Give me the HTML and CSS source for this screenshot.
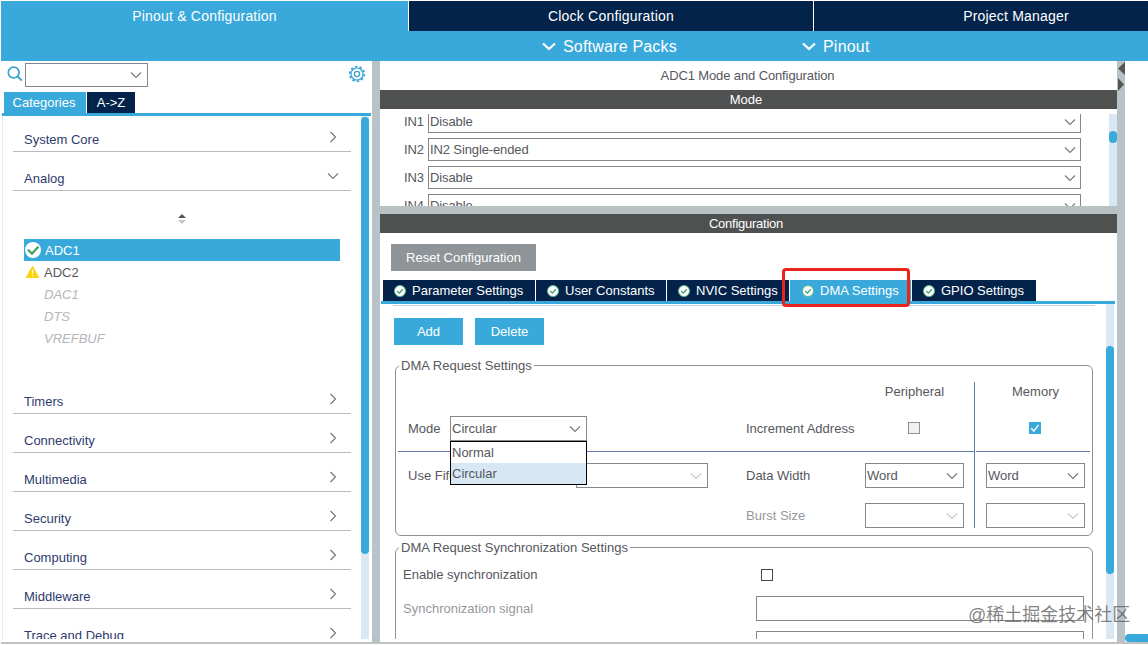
FILE: index.html
```
<!DOCTYPE html>
<html lang="en">
<head>
  <meta charset="UTF-8">
  <title>Pinout &amp; Configuration</title>
  <link rel="stylesheet" href="styles.css">
</head>
<body>

  <!-- shared icons -->
  <svg class="defs" width="0" height="0">
    <symbol id="down" viewBox="0 0 12 8"><path d="M1 1.5l5 5 5-5" fill="none" stroke="currentColor" stroke-width="1.1"/></symbol>
    <symbol id="right" viewBox="0 0 8 12"><path d="M1.5 1l5 5-5 5" fill="none" stroke="currentColor" stroke-width="1.2"/></symbol>
    <symbol id="ok" viewBox="0 0 14 14">
      <circle cx="7" cy="7" r="5.5" fill="#fff" stroke="#5fb98c" stroke-width="1"/>
      <path d="M4.2 7l2.2 2.1 3.4-3.8" fill="none" stroke="#3d9f6c" stroke-width="1.3"/>
    </symbol>
  </svg>

  <div class="app">
    <nav class="main-tabs">
      <div class="main-tab active">Pinout &amp; Configuration</div>
      <div class="main-tab">Clock Configuration</div>
      <div class="main-tab">Project Manager</div>
    </nav>
    <div class="toolbar">
      <div class="tool packs"><svg width="14" height="9" viewBox="0 0 14 9"><path d="M1 1.5l6 5.5 6-5.5" fill="none" stroke="#fff" stroke-width="2.2"/></svg>Software Packs</div>
      <div class="tool"><svg width="14" height="9" viewBox="0 0 14 9"><path d="M1 1.5l6 5.5 6-5.5" fill="none" stroke="#fff" stroke-width="2.2"/></svg>Pinout</div>
    </div>

    <div class="workspace">
      <aside class="sidebar">
        <div class="search">
          <svg class="lens" width="16" height="16" viewBox="0 0 16 16"><circle cx="6.7" cy="6.5" r="5.4" fill="none" stroke="#3aa3d4" stroke-width="1.7"/><path d="M10.6 10.4l4.2 4.3" stroke="#3aa3d4" stroke-width="1.9"/></svg>
          <div class="select search-box"><svg><use href="#down"/></svg></div>
          <svg class="gear" width="18" height="18" viewBox="0 0 18 18">
            <circle cx="9" cy="9" r="7.3" fill="none" stroke="#3aa3d4" stroke-width="1.7" stroke-dasharray="2.5 2.087"/>
            <circle cx="9" cy="9" r="6" fill="none" stroke="#3aa3d4" stroke-width="1.2"/>
            <circle cx="9" cy="9" r="2.6" fill="none" stroke="#3aa3d4" stroke-width="1.3"/>
          </svg>
        </div>
        <div class="side-tabs">
          <div class="side-tab active">Categories</div>
          <div class="side-tab">A-&gt;Z</div>
        </div>
        <div class="side-body">
          <div class="categories">
            <div class="category first">System Core<svg width="8" height="12"><use href="#right"/></svg></div>
            <div class="category open">Analog<svg width="12" height="8"><use href="#down"/></svg></div>
            <div class="peripherals">
              <svg class="sort" width="10" height="10" viewBox="0 0 10 10"><path d="M1 4l4-4 4 4z" fill="#555"/><path d="M1 6h8l-4 4z" fill="#c4c4c4"/></svg>
              <div class="peripheral selected">
                <svg width="18" height="18" viewBox="0 0 18 18"><circle cx="9" cy="9" r="8" fill="#fff"/><path d="M4 8.7l4 4 6.3-7" fill="none" stroke="#3f9e60" stroke-width="2.3"/></svg>ADC1
              </div>
              <div class="peripheral warn">
                <svg width="18" height="18" viewBox="0 0 18 18"><path d="M8.5 3.4l6.2 11H2.3z" fill="#fdd20a" stroke="#fdd20a" stroke-width="1" stroke-linejoin="round"/><path d="M8.5 6.5v4.3M8.5 12v1.5" stroke="#fff" stroke-width="1.2"/></svg>ADC2
              </div>
              <div class="peripheral off">DAC1</div>
              <div class="peripheral off">DTS</div>
              <div class="peripheral off">VREFBUF</div>
            </div>
            <div class="category">Timers<svg width="8" height="12"><use href="#right"/></svg></div>
            <div class="category">Connectivity<svg width="8" height="12"><use href="#right"/></svg></div>
            <div class="category">Multimedia<svg width="8" height="12"><use href="#right"/></svg></div>
            <div class="category">Security<svg width="8" height="12"><use href="#right"/></svg></div>
            <div class="category">Computing<svg width="8" height="12"><use href="#right"/></svg></div>
            <div class="category">Middleware<svg width="8" height="12"><use href="#right"/></svg></div>
            <div class="category">Trace and Debug<svg width="8" height="12"><use href="#right"/></svg></div>
          </div>
          <div class="scrollbar side-scroll"><div class="thumb"></div></div>
        </div>
      </aside>

      <div class="splitter"></div>

      <main class="content">
        <div class="title">ADC1 Mode and Configuration</div>
        <div class="bar">Mode</div>
        <section class="mode">
          <div class="inputs">
            <div class="input-row"><label>IN1</label><div class="select">Disable<svg><use href="#down"/></svg></div></div>
            <div class="input-row"><label>IN2</label><div class="select">IN2 Single-ended<svg><use href="#down"/></svg></div></div>
            <div class="input-row"><label>IN3</label><div class="select">Disable<svg><use href="#down"/></svg></div></div>
            <div class="input-row"><label>IN4</label><div class="select">Disable<svg><use href="#down"/></svg></div></div>
          </div>
          <div class="scrollbar mode-scroll"><div class="thumb"></div></div>
        </section>
        <div class="h-splitter"></div>
        <div class="bar config-bar">Configuration</div>

        <section class="config">
          <button class="reset">Reset Configuration</button>
          <div class="tabs">
            <div class="tab t-param"><svg><use href="#ok"/></svg>Parameter Settings</div>
            <div class="tab t-user"><svg><use href="#ok"/></svg>User Constants</div>
            <div class="tab t-nvic"><svg><use href="#ok"/></svg>NVIC Settings</div>
            <div class="tab t-dma active"><svg><use href="#ok"/></svg>DMA Settings<div class="highlight"></div></div>
            <div class="tab t-gpio"><svg><use href="#ok"/></svg>GPIO Settings</div>
          </div>
          <div class="config-body">
            <div class="dma">
              <div class="buttons">
                <button>Add</button>
                <button>Delete</button>
              </div>

              <fieldset class="request">
                <legend>DMA Request Settings</legend>
                <div class="request-main">
                  <div class="row head"><span class="peripheral-head">Peripheral</span></div>
                  <div class="row">
                    <label class="mode-label">Mode</label>
                    <div class="select mode-select">Circular<svg><use href="#down"/></svg>
                      <div class="menu">
                        <div class="option">Normal</div>
                        <div class="option current">Circular</div>
                      </div>
                    </div>
                    <label class="field-label">Increment Address</label>
                    <div class="check-cell"><span class="check disabled"></span></div>
                  </div>
                  <div class="rule"></div>
                  <div class="row">
                    <label class="fifo-label">Use Fifo</label>
                    <div class="select fifo-select disabled"><svg><use href="#down"/></svg></div>
                    <label class="field-label">Data Width</label>
                    <div class="select width-select">Word<svg><use href="#down"/></svg></div>
                  </div>
                  <div class="row last">
                    <label class="field-label dim">Burst Size</label>
                    <div class="select width-select disabled"><svg><use href="#down"/></svg></div>
                  </div>
                </div>
                <div class="request-memory">
                  <div class="row head"><span class="memory-head">Memory</span></div>
                  <div class="row">
                    <div class="check-cell"><span class="check on"><svg width="12" height="12" viewBox="0 0 12 12"><path d="M2.3 6.3l2.5 2.9 4.7-6.4" fill="none" stroke="#fff" stroke-width="1.4"/></svg></span></div>
                  </div>
                  <div class="rule"></div>
                  <div class="row"><div class="select width-select">Word<svg><use href="#down"/></svg></div></div>
                  <div class="row last"><div class="select width-select disabled"><svg><use href="#down"/></svg></div></div>
                </div>
              </fieldset>

              <fieldset class="sync">
                <legend>DMA Request Synchronization Settings</legend>
                <div class="sync-row"><label>Enable synchronization</label><span class="check"></span></div>
                <div class="sync-row dim"><label>Synchronization signal</label><div class="field"></div></div>
                <div class="sync-row dim"><label>Signal polarity</label><div class="field"></div></div>
              </fieldset>
            </div>
            <div class="scrollbar config-scroll"><div class="thumb"></div></div>
          </div>
        </section>
      </main>

      <div class="splitter right-splitter">
        <svg width="8" height="32" viewBox="0 0 8 32"><path d="M8 1v13L1 7.5zM1 17v13l6-6.5z" fill="#555"/></svg>
      </div>
      <div class="pinout-view"><div class="pinout-scroll"></div></div>
    </div>
    <div class="watermark">@稀土掘金技术社区</div>
  </div>

</body>
</html>
```
FILE: styles.css
```
* { box-sizing: border-box; }
body {
  margin: 0;
  background: #fff;
  font-family: "Liberation Sans", Arial, sans-serif;
  font-size: 13px;
  line-height: 16px;
  color: #56575c;
}
.defs { position: absolute; }
.app {
  position: relative;
  width: 1148px;
  height: 645px;
  padding: 1px 0 0 1px;
  overflow: hidden;
  display: flex;
  flex-direction: column;
}
button {
  font: inherit;
  color: #fff;
  background: #39a9dc;
  border: none;
  padding: 0;
}
fieldset { margin: 0; padding: 0; min-width: 0; }
.dim { color: #96989c; }

/* header */
.main-tabs {
  display: flex;
  gap: 1px;
  height: 30px;
  flex: none;
}
.main-tab {
  flex: none;
  width: 404px;
  background: #03234b;
  color: #fff;
  font-size: 14px;
  letter-spacing: 0.2px;
  line-height: 30px;
  text-align: center;
}
.main-tab.active { width: 407px; background: #39a9dc; }
.toolbar {
  display: flex;
  flex: none;
  height: 30px;
  padding-left: 541px;
  background: #39a9dc;
  color: #fff;
  font-size: 16px;
  letter-spacing: 0.2px;
}
.tool { display: flex; align-items: center; gap: 7px; padding-top: 1px; }
.packs { width: 260px; }

.workspace {
  display: flex;
  flex: none;
  height: 583px;
  border-bottom: 2px solid #c0c1c3;
}
.splitter { width: 8px; flex: none; background: #b7c3c8; }
.scrollbar { width: 8px; flex: none; background: #d9e8f3; }
.thumb { background: #39a9dc; border-radius: 4px; }

.select {
  position: relative;
  display: flex;
  align-items: center;
  justify-content: space-between;
  border: 1px solid #85878b;
  background: #fff;
  padding: 0 4px 0 1px;
  height: 25px;
}
.select svg { width: 12px; height: 8px; margin-left: auto; color: #76787b; }
.select.disabled svg { color: #c5c7c9; }

/* sidebar */
.sidebar {
  width: 371px;
  flex: none;
  display: flex;
  flex-direction: column;
  padding-right: 1px;
}
.search {
  display: flex;
  height: 31px;
  padding: 2px 5px 0 6px;
}
.lens { margin: 3px 2px 0 0; }
.search-box { width: 123px; height: 24px; padding-right: 5px; }
.gear { margin: 2px 0 0 auto; }
.side-tabs {
  display: flex;
  gap: 1px;
  padding-left: 2px;
  margin-left: 1px;
  border-bottom: 3px solid #39a9dc;
}
.side-tab {
  height: 21px;
  width: 48px;
  line-height: 21px;
  text-align: center;
  color: #fff;
  background: #03234b;
}
.side-tab.active { width: 82px; padding-right: 2px; background: #39a9dc; }
.side-body {
  display: flex;
  flex: 1;
  min-height: 0;
  margin: 0 1px 3px 1px;
  border-left: 1px solid #e6e9ef;
}
.categories {
  width: 358px;
  padding: 0 10px;
  overflow: hidden;
}
.category {
  display: flex;
  justify-content: space-between;
  height: 39px;
  padding: 19px 14px 0 11px;
  border-bottom: 1px solid #b9bbbd;
  color: #2e3b6e;
}
.category svg { color: #76797c; margin-top: -1px; }
.category.first { height: 36px; padding-top: 16px; }
.category.open { padding-right: 12px; }
.category.open svg { margin-top: 1px; }
.peripherals { height: 184px; padding: 23px 11px 0; }
.sort { display: block; margin: 0 auto 15px; }
.peripheral {
  display: flex;
  align-items: center;
  height: 22px;
  padding-top: 1px;
  gap: 3px;
}
.peripheral svg { margin-top: -1px; }
.peripheral.selected { color: #fff; background: #39a9dc; }
.peripheral.warn { gap: 2px; }
.peripheral.off { padding-left: 20px; font-style: italic; color: #b4b6b9; }
.side-scroll .thumb { height: 437px; margin-top: 1px; }

/* center panel */
.content {
  width: 737px;
  flex: none;
  display: flex;
  flex-direction: column;
}
.title {
  height: 29px;
  line-height: 29px;
  text-align: center;
  padding-right: 2px;
  letter-spacing: -0.12px;
}
.bar {
  height: 19px;
  line-height: 19px;
  text-align: center;
  padding-right: 5px;
  color: #fff;
  background: #4f5150;
}
.config-bar { letter-spacing: -0.25px; }
.mode {
  display: flex;
  justify-content: space-between;
  height: 92px;
  margin-top: 5px;
  overflow: hidden;
}
.inputs {
  display: flex;
  flex-direction: column;
  gap: 5px;
  width: 701px;
  margin-top: -4px;
  letter-spacing: -0.12px;
}
.input-row { display: flex; align-items: center; padding-left: 24px; }
.input-row label { width: 24px; }
.input-row .select { width: 653px; height: 23px; }
.mode-scroll .thumb { height: 12px; margin-top: 17px; }
.h-splitter { height: 8px; flex: none; background: #b9c1c4; }

.config {
  flex: 1;
  min-height: 0;
  display: flex;
  flex-direction: column;
  padding-top: 11px;
}
.reset {
  width: 145px;
  height: 27px;
  flex: none;
  margin-left: 11px;
  background: #8f9498;
}
.tabs {
  display: flex;
  gap: 1px;
  margin: 9px 2px 0 1px;
  padding-left: 2px;
  border-bottom: 3px solid #39a9dc;
}
.tab {
  position: relative;
  display: flex;
  align-items: center;
  height: 21px;
  padding-left: 10px;
  gap: 5px;
  color: #fff;
  background: #03234b;
  white-space: nowrap;
}
.tab svg { width: 14px; height: 14px; flex: none; }
.tab.active { background: #39a9dc; }
.t-param { width: 152px; }
.t-user { width: 130px; }
.t-nvic { width: 122px; }
.t-dma { width: 121px; padding-left: 11px; }
.t-gpio { width: 124px; }
/* red frame drawn over the DMA tab */
.highlight {
  position: absolute;
  left: -8px;
  top: -12px;
  width: 128px;
  height: 39px;
  border: 3px solid #e8241c;
  border-radius: 4px;
}
.config-body {
  display: flex;
  flex: 1;
  min-height: 0;
  margin-bottom: 3px;
  overflow: hidden;
}
.dma { width: 726px; padding: 1px 13px 0 15px; }
.config-scroll .thumb { height: 228px; margin-top: 42px; }
.buttons {
  display: flex;
  gap: 12px;
  margin: 0 -2px 0 -2px;
  padding: 12px 0 0 1px;
  border-top: 1px solid #c3d2e3;
}
.buttons button { width: 69px; height: 27px; }

.request, .sync {
  width: 698px;
  border: 1px solid #8d9095;
  border-radius: 6px;
}
legend {
  height: 17px;
  line-height: 17px;
  margin-left: 1px;
  padding: 0 2px;
}
.request {
  height: 179px;
  margin-top: 12px;
  padding: 8px 2px 0;
  display: flex;
}
.request-main { width: 576px; }
.request-memory {
  flex: 1;
  height: 146px;
  border-left: 1px solid #5d7ea8;
}
.row { display: flex; align-items: center; height: 25px; }
.row.head { height: 20px; margin-bottom: 14px; }
.row.last { margin-top: 15px; }
.rule { height: 1px; margin: 10px 0 11px; background: #5d7ea8; }
.peripheral-head { width: 99px; margin-left: 467px; text-align: center; }
.mode-label { width: 42px; margin-left: 10px; }
.mode-select { width: 137px; margin-right: 159px; padding-right: 5px; }
.fifo-label { width: 168px; margin-left: 10px; }
.fifo-select { width: 132px; margin-right: 38px; padding-right: 5px; }
.field-label { width: 119px; }
.row.last .field-label { margin-left: 348px; }
.width-select { width: 99px; padding-right: 5px; }
.check-cell { width: 98px; height: 14px; display: flex; justify-content: center; }
.request-memory .row { padding-left: 11px; }
.request-memory .rule { margin-left: 1px; }
.memory-head { width: 99px; text-align: center; }
.check { width: 12px; height: 12px; border: 1px solid #45474a; }
.check.disabled { border-color: #8d9095; background: #f0f1f3; }
.check.on { display: flex; border: none; background: #39a9dc; }
.menu {
  position: absolute;
  left: -1px;
  top: 24px;
  width: 137px;
  border: 1px solid #000;
  background: #fff;
  z-index: 2;
}
.option { height: 21px; line-height: 21px; padding-left: 1px; }
.option.current { background: #d8e7f4; }

.sync { margin-top: 3px; height: 160px; padding: 6px 8px 0 7px; }
.sync legend { margin-left: -4px; }
.sync-row { display: flex; align-items: center; height: 25px; margin-bottom: 10px; }
.sync-row:first-of-type { margin-bottom: 9px; }
.sync-row label { width: 353px; }
.sync-row .check { margin-left: 5px; }
.field { width: 328px; height: 25px; border: 1px solid #85878b; }

/* right side */
.right-splitter svg { display: block; }
.pinout-view { flex: 1; display: flex; align-items: flex-end; overflow: hidden; margin-bottom: -2px; }
.pinout-scroll {
  width: 40px;
  height: 8px;
  flex: none;
  margin-bottom: 2px;
  border-radius: 4px;
  background: #39a9dc;
}
.watermark {
  position: absolute;
  left: 968px;
  top: 603px;
  font-family: "Liberation Sans", "Noto Sans CJK SC", sans-serif;
  font-size: 18px;
  line-height: 25px;
  white-space: nowrap;
  color: rgba(90, 90, 90, 0.75);
}
```
